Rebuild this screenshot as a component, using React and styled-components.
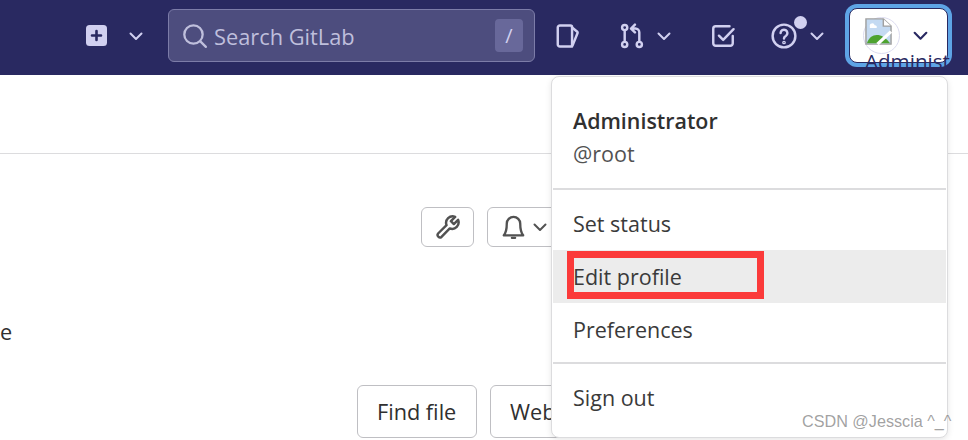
import React from 'react';
import styled, { createGlobalStyle } from 'styled-components';

const GlobalStyle = createGlobalStyle`
  html, body {
    margin: 0;
    padding: 0;
    background: #fff;
    overflow: hidden;
  }
  body {
    font-family: 'Open Sans', 'Noto Sans', sans-serif;
    color: #303030;
  }
`;

const Page = styled.div`
  position: relative;
  width: 968px;
  height: 440px;
  overflow: hidden;
`;

const Navbar = styled.header`
  height: 75px;
  box-sizing: border-box;
  padding: 0 0 4px 86px;
  display: flex;
  align-items: center;
  background: #292961;
  color: #d1d0f0;
`;

const NavGroup = styled.div`
  display: flex;
  align-items: center;
  gap: ${(p) => p.$gap || 0}px;
  margin-left: ${(p) => p.$left || 0}px;
`;

const SearchBox = styled.div`
  width: 367px;
  height: 53px;
  box-sizing: border-box;
  margin-left: 24px;
  padding: 0 11px 0 13px;
  display: flex;
  align-items: center;
  gap: 6px;
  background: #4d4d7e;
  border: 1.5px solid #7c7ca8;
  border-radius: 6px;
  color: #bfbfdc;
`;

const SearchText = styled.span`
  flex: 1;
  margin-top: 2px;
  font-size: 21.8px;
  line-height: 1;
`;

const SlashKey = styled.kbd`
  width: 28px;
  height: 33px;
  display: flex;
  align-items: center;
  justify-content: center;
  background: #68689a;
  border-radius: 4px;
  font-family: inherit;
  font-size: 20px;
  color: #d1d0f0;
`;

const HelpWrap = styled.span`
  position: relative;
  display: flex;
`;

const HelpDot = styled.span`
  position: absolute;
  top: -7px;
  right: -10px;
  width: 13px;
  height: 13px;
  border-radius: 50%;
  background: #d1d0f0;
`;

const AvatarButton = styled.button`
  width: 99px;
  height: 55px;
  box-sizing: border-box;
  margin: 0 0 0 24px;
  padding: 0 0 0 12.5px;
  display: flex;
  align-items: center;
  gap: 12.5px;
  background: #fff;
  border: 1.5px solid #292961;
  border-radius: 8px;
  box-shadow: 0 0 0 4px #5ea4e6;
  color: #292961;
`;

const AvatarFrame = styled.span`
  position: relative;
  width: 37px;
  height: 37px;
  box-sizing: border-box;
  flex: none;
  border: 1px solid #dcdcf0;
  border-radius: 50%;
  display: block;
`;

const BrokenPicture = styled.svg`
  position: absolute;
  left: 1px;
  top: 0;
`;

const AltText = styled.span`
  position: absolute;
  left: 865px;
  top: 49px;
  width: 86px;
  height: 19px;
  overflow: hidden;
  font-size: 20.6px;
  line-height: 24px;
  color: #292961;
  white-space: nowrap;
`;

const Content = styled.main`
  display: flex;
  flex-direction: column;
`;

const TopRule = styled.div`
  height: 78px;
  border-bottom: 1px solid #dcdcde;
`;

const ActionRow = styled.div`
  height: 40px;
  margin-top: 53px;
  padding-left: 421px;
  display: flex;
  gap: 13px;
`;

const IconButton = styled.div`
  width: ${(p) => p.$width}px;
  height: 40px;
  flex: none;
  box-sizing: border-box;
  display: flex;
  align-items: center;
  justify-content: ${(p) => (p.$start ? 'flex-start' : 'center')};
  gap: 6px;
  padding-left: ${(p) => (p.$start ? 13 : 0)}px;
  border: 1.5px solid #bfbfc3;
  border-radius: 6px;
  color: #525252;
`;

const Snippet = styled.p`
  margin: 70px 0 0;
  height: 30px;
  font-size: 21.7px;
  line-height: 30px;
  color: #303030;
`;

const FileRow = styled.div`
  margin-top: 38px;
  padding-left: 357px;
  display: flex;
  gap: 13px;
`;

const FileButton = styled.div`
  width: ${(p) => p.$width}px;
  height: 53px;
  flex: none;
  box-sizing: border-box;
  padding-left: ${(p) => p.$pad}px;
  display: flex;
  align-items: center;
  border: 1.5px solid #bfbfc3;
  border-radius: 6px;
  font-size: 21.7px;
  color: #303030;
`;

const Dropdown = styled.nav`
  position: absolute;
  left: 551px;
  top: 76px;
  width: 397px;
  height: 362px;
  box-sizing: border-box;
  background: #fff;
  border: 1px solid #dcdcde;
  border-radius: 8px;
  box-shadow: 0 2px 6px rgba(0, 0, 0, 0.1);
  padding: 0 1px;
`;

const UserBlock = styled.div`
  height: 113px;
  box-sizing: border-box;
  padding: 27px 20px 0;
  border-bottom: 2px solid #dcdcde;
`;

const UserName = styled.div`
  font-size: 21.4px;
  line-height: 34px;
  font-weight: 600;
  color: #303030;
`;

const UserHandle = styled.div`
  font-size: 21.5px;
  line-height: 31px;
  color: #525252;
`;

const MenuSection = styled.div`
  padding: 7px 0 ${(p) => (p.$last ? 7 : 6)}px;
  border-bottom: ${(p) => (p.$last ? 'none' : '2px solid #dcdcde')};
`;

const MenuItem = styled.div`
  height: 53px;
  box-sizing: border-box;
  padding-left: 20px;
  display: flex;
  align-items: center;
  font-size: 21.5px;
  color: #3a3a3a;
  background: ${(p) => (p.$active ? '#ececec' : 'transparent')};
`;

const RedMark = styled.div`
  position: absolute;
  left: 567px;
  top: 251px;
  width: 197px;
  height: 48px;
  box-sizing: border-box;
  border: 7px solid #fb3a3a;
`;

const Watermark = styled.span`
  position: absolute;
  left: 802px;
  top: 411px;
  font-family: 'Liberation Sans', Arial, sans-serif;
  font-size: 16.2px;
  line-height: 20px;
  color: rgba(120, 120, 120, 0.7);
  white-space: nowrap;
`;

const Svg = ({ size = 24, box = 16, children }) => (
  <svg
    width={size}
    height={size}
    viewBox={`0 0 ${box} ${box}`}
    fill="none"
    stroke="currentColor"
    strokeWidth="1.5"
    strokeLinecap="round"
    strokeLinejoin="round"
  >
    {children}
  </svg>
);

const Chevron = ({ size = 16 }) => (
  <svg width={size} height={size} viewBox="0 0 16 16" fill="none" stroke="currentColor" strokeWidth="2" strokeLinecap="round" strokeLinejoin="round">
    <path d="M2.5 5.5 8 11l5.5-5.5" />
  </svg>
);

const PlusSquare = () => (
  <svg width="21" height="21" viewBox="0 0 21 21">
    <rect width="21" height="21" rx="3.5" fill="#d1d0f0" />
    <path d="M10.5 6v9M6 10.5h9" stroke="#292961" strokeWidth="2.6" strokeLinecap="round" />
  </svg>
);

const SearchIcon = () => (
  <Svg size={26} box={17}>
    <circle cx="7.5" cy="7.5" r="6" />
    <path d="m12 12 3.6 3.6" />
  </Svg>
);

const IssueIcon = () => (
  <Svg size={26}>
    <path d="M3 1.5h6.5a1 1 0 0 1 1 1v12H3A1.3 1.3 0 0 1 1.7 13.2V2.8A1.3 1.3 0 0 1 3 1.5Z" />
    <path d="M10.5 2.8 13.7 5.4a.7.7 0 0 1 .2.8l-2.8 6.9a2 2 0 0 1-.6.9" />
  </Svg>
);

const MergeIcon = () => (
  <Svg size={26}>
    <circle cx="3.5" cy="2.8" r="1.6" />
    <circle cx="3.5" cy="13.2" r="1.6" />
    <circle cx="12.5" cy="13.2" r="1.6" />
    <path d="M3.5 4.4v7.2M12.5 11.6V5.8a2.4 2.4 0 0 0-2.4-2.4H7.8M9.8 1 7.4 3.4l2.4 2.4" />
  </Svg>
);

const TodoIcon = () => (
  <Svg size={26}>
    <path d="M14 8v4.5a1.5 1.5 0 0 1-1.5 1.5h-9A1.5 1.5 0 0 1 2 12.5v-9A1.5 1.5 0 0 1 3.5 2H12" />
    <path d="m5.5 7.8 2.6 2.6 6.4-6.6" />
  </Svg>
);

const HelpIcon = () => (
  <Svg size={26}>
    <circle cx="8" cy="8" r="7" />
    <path d="M5.9 6.2a2.1 2.1 0 1 1 3.2 1.8c-.7.4-1.1.9-1.1 1.6" />
    <circle cx="8" cy="12" r=".4" />
  </Svg>
);

const BrokenImage = () => (
  <BrokenPicture width="27" height="27" viewBox="0 0 28 30" preserveAspectRatio="none">
    <path d="M1 1h18l8 8v20H1Z" fill="#c4daf2" stroke="#a0a0a0" strokeWidth="1.5" />
    <path d="M19 1v8h8" fill="#fff" stroke="#a0a0a0" strokeWidth="1.5" />
    <path d="M5 9a2.5 2.5 0 0 1 5-1 2 2 0 0 1 2 3H5Z" fill="#fff" />
    <path d="M2 28c2-7 7-10 12-9s8 4 12 9Z" fill="#4ea32f" />
    <path d="M13 29 27 15" stroke="#fff" strokeWidth="3.5" />
  </BrokenPicture>
);

const WrenchIcon = () => (
  <Svg size={26}>
    <path d="M14.2 3.6 11.6 6.2 9.8 4.4l2.6-2.6a4 4 0 0 0-5.3 5.1L1.9 12a1.5 1.5 0 0 0 2.1 2.1l5.1-5.2a4 4 0 0 0 5.1-5.3Z" />
  </Svg>
);

const BellIcon = () => (
  <Svg size={25}>
    <path d="M8 1.2a4.3 4.3 0 0 0-4.3 4.3c0 4.5-1 6.5-1.9 7.5h12.4c-.9-1-1.9-3-1.9-7.5A4.3 4.3 0 0 0 8 1.2Z" />
    <path d="M7 14.6h2" />
  </Svg>
);

const App = () => (
  <Page>
    <GlobalStyle />
    <Navbar>
      <NavGroup $gap={21}>
        <PlusSquare />
        <Chevron />
      </NavGroup>
      <SearchBox>
        <SearchIcon />
        <SearchText>Search GitLab</SearchText>
        <SlashKey>/</SlashKey>
      </SearchBox>
      <NavGroup $left={20}>
        <IssueIcon />
      </NavGroup>
      <NavGroup $left={38} $gap={11}>
        <MergeIcon />
        <Chevron />
      </NavGroup>
      <NavGroup $left={38}>
        <TodoIcon />
      </NavGroup>
      <NavGroup $left={35} $gap={12}>
        <HelpWrap>
          <HelpIcon />
          <HelpDot />
        </HelpWrap>
        <Chevron />
      </NavGroup>
      <AvatarButton>
        <AvatarFrame>
          <BrokenImage />
        </AvatarFrame>
        <Chevron size={17} />
      </AvatarButton>
      <AltText>Administrator</AltText>
    </Navbar>

    <Content>
      <TopRule />
      <ActionRow>
        <IconButton $width={53}>
          <WrenchIcon />
        </IconButton>
        <IconButton $width={80} $start>
          <BellIcon />
          <Chevron size={16} />
        </IconButton>
      </ActionRow>
      <Snippet>e</Snippet>
      <FileRow>
        <FileButton $width={120} $pad={19}>Find file</FileButton>
        <FileButton $width={120} $pad={19}>Web IDE</FileButton>
      </FileRow>
    </Content>

    <Dropdown>
      <UserBlock>
        <UserName>Administrator</UserName>
        <UserHandle>@root</UserHandle>
      </UserBlock>
      <MenuSection>
        <MenuItem>Set status</MenuItem>
        <MenuItem $active>Edit profile</MenuItem>
        <MenuItem>Preferences</MenuItem>
      </MenuSection>
      <MenuSection $last>
        <MenuItem>Sign out</MenuItem>
      </MenuSection>
    </Dropdown>
    <RedMark />
    <Watermark>CSDN @Jesscia ^_^</Watermark>
  </Page>
);

export default App;
